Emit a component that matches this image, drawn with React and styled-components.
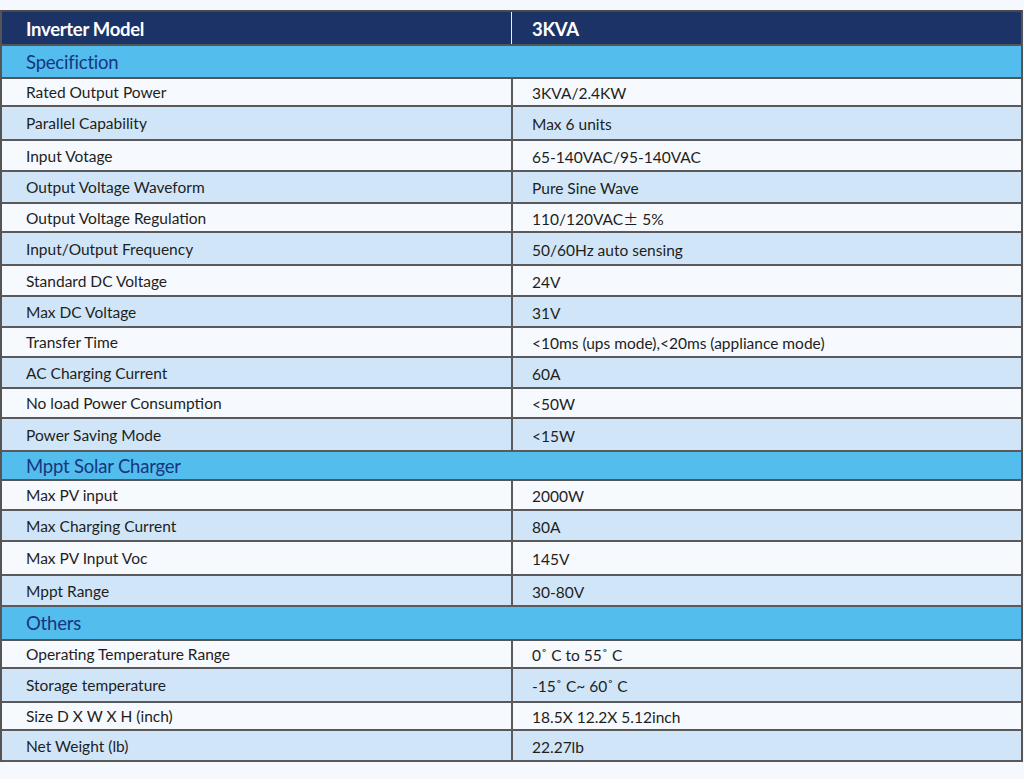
import styled, { createGlobalStyle } from "styled-components";

const GlobalStyle = createGlobalStyle`
  html, body {
    margin: 0;
    padding: 0;
    background: #f5f8fc;
  }
  * {
    box-sizing: border-box;
  }
`;

const Wide = styled.span`
  font-family: "Noto Sans CJK SC", "Lato", sans-serif;
  font-size: 15px;
`;

const sections = [
  {
    title: "Specifiction",
    height: 33,
    rows: [
      ["Rated Output Power", "3KVA/2.4KW", 28],
      ["Parallel Capability", "Max 6 units", 34],
      ["Input Votage", "65-140VAC/95-140VAC", 31],
      ["Output Voltage Waveform", "Pure Sine Wave", 32],
      [
        "Output Voltage Regulation",
        <>
          110/120VAC<Wide>{"\u00b1"}</Wide> 5%
        </>,
        29,
      ],
      ["Input/Output Frequency", "50/60Hz auto sensing", 33],
      ["Standard DC Voltage", "24V", 31],
      ["Max DC Voltage", "31V", 31],
      ["Transfer Time", "<10ms (ups mode),<20ms (appliance mode)", 30],
      ["AC Charging Current", "60A", 31],
      ["No load Power Consumption", "<50W", 30],
      ["Power Saving Mode", "<15W", 33],
    ],
  },
  {
    title: "Mppt Solar Charger",
    height: 29,
    rows: [
      ["Max PV input", "2000W", 30],
      ["Max Charging Current", "80A", 31],
      ["Max PV Input Voc", "145V", 34],
      ["Mppt Range", "30-80V", 31],
    ],
  },
  {
    title: "Others",
    height: 34,
    rows: [
      ["Operating Temperature Range", "0\u02da C to 55\u02da C", 28],
      ["Storage temperature", "-15\u02da C~ 60\u02da C", 34],
      ["Size D X W X H (inch)", "18.5X 12.2X 5.12inch", 28],
      ["Net Weight (lb)", "22.27lb", 31],
    ],
  },
];

function App() {
  return (
    <>
      <GlobalStyle />
      <Page>
        <Table>
          <HeaderRow>
            <HeaderCell>Inverter Model</HeaderCell>
            <HeaderCell $divider>3KVA</HeaderCell>
          </HeaderRow>
          {sections.map((section) => (
            <div key={section.title}>
              <SectionRow $h={section.height}>{section.title}</SectionRow>
              {section.rows.map(([label, value, h], i) => (
                <Row key={label} $h={h} $alt={i % 2 === 1}>
                  <Label>{label}</Label>
                  <Value>{value}</Value>
                </Row>
              ))}
            </div>
          ))}
        </Table>
      </Page>
    </>
  );
}

export default App;

const Page = styled.div`
  width: 1024px;
  height: 779px;
  padding-top: 10px;
  background: #f5f8fc;
  font-family: "Lato", "Open Sans", sans-serif;
`;

const Table = styled.div`
  width: 1023px;
  border-top: 2px solid #4a4a4a;
  border-left: 2px solid #555;
  border-right: 2px solid #555;
`;

const HeaderRow = styled.div`
  display: grid;
  grid-template-columns: 509px 1fr;
  height: 34px;
  background: #1c3367;
  border-bottom: 2px solid #555;
`;

const HeaderCell = styled.div`
  display: flex;
  align-items: center;
  padding-left: ${(p) => (p.$divider ? "20px" : "24px")};
  padding-top: 2px;
  color: #ffffff;
  font-size: 18.5px;
  font-weight: 700;
  letter-spacing: -0.3px;
  border-left: ${(p) => (p.$divider ? "1px solid #e8eef8" : "none")};
`;

const SectionRow = styled.div`
  display: flex;
  align-items: center;
  height: ${(p) => p.$h}px;
  padding-left: 24px;
  background: #53bdee;
  border-bottom: 2px solid #555;
  color: #17367e;
  font-size: 18.5px;
  letter-spacing: -0.2px;
`;

const Row = styled.div`
  display: grid;
  grid-template-columns: 509px 1fr;
  height: ${(p) => p.$h}px;
  background: ${(p) => (p.$alt ? "#d0e6f8" : "#f6f9fd")};
  border-bottom: 2px solid #5a5a5a;
  color: #1e1e1e;
  font-size: 15.5px;
`;

const Label = styled.div`
  display: flex;
  align-items: center;
  padding-left: 24px;
`;

const Value = styled.div`
  display: flex;
  align-items: center;
  white-space: pre;
  padding-left: 19px;
  padding-top: 2px;
  border-left: 2px solid #5a5a5a;
`;
